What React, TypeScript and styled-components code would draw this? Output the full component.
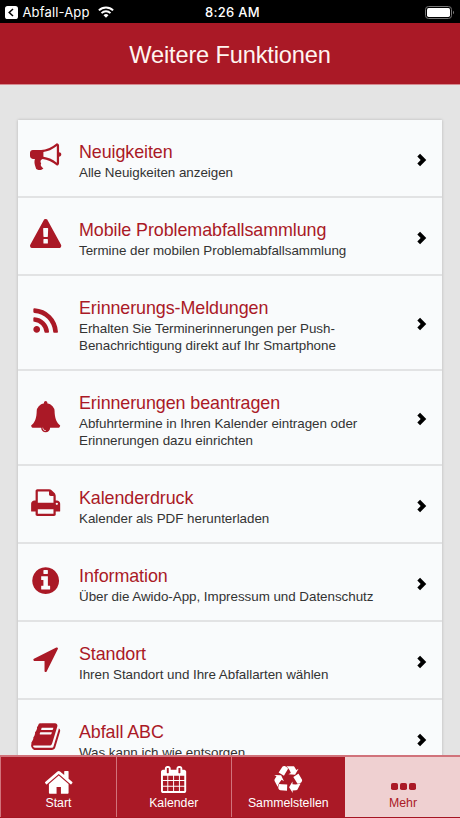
import React from "react";
import styled, { createGlobalStyle } from "styled-components";

const RED = "#aa1926";

const GlobalStyle = createGlobalStyle`
  * { box-sizing: border-box; }
  html, body { margin: 0; padding: 0; overflow: hidden; }
  body { font-family: "Liberation Sans", Arial, Helvetica, sans-serif; }
`;

const Screen = styled.div`
  width: 460px;
  height: 818px;
  display: flex;
  flex-direction: column;
  overflow: hidden;
  background: #e4e4e4;
`;

const StatusBar = styled.div`
  flex: none;
  height: 23px;
  display: grid;
  grid-template-columns: 1fr auto 1fr;
  align-items: center;
  padding: 1px 5px 0;
  background: #000;
  color: #fff;
  font: 500 13px/22px Inter, sans-serif;
`;

const BackGroup = styled.div`
  display: flex;
  align-items: center;
  font-weight: 400;
  letter-spacing: 0.15px;
`;

const BackLabel = styled.span`
  margin: 0 8px 0 4.5px;
`;

const Clock = styled.span`
  padding-left: 5px;
  letter-spacing: 0.3px;
`;

const BatterySlot = styled.div`
  display: flex;
  justify-content: flex-end;
`;

const Header = styled.header`
  flex: none;
  height: 62px;
  display: flex;
  align-items: center;
  justify-content: center;
  padding-top: 3px;
  background: ${RED};
  border-bottom: 1px solid #d58a90;
  color: #fff5f0;
`;

const Heading = styled.h1`
  margin: 0;
  font-size: 23.6px;
  font-weight: 400;
  letter-spacing: -0.15px;
  line-height: 28px;
`;

const Content = styled.main`
  flex: 1;
  min-height: 0;
  overflow: hidden;
  padding: 35px 18px 0;
`;

const Card = styled.div`
  background: #f9fbfc;
  box-shadow: 0 0 3px rgba(0, 0, 0, 0.2);
`;

const Row = styled.div<{ $height: number }>`
  height: ${(p) => p.$height}px;
  display: grid;
  grid-template-columns: 61px 1fr 26px;
  border-bottom: 2px solid #e2e3e4;
`;

const IconCell = styled.div`
  display: flex;
  align-items: center;
  padding: 0 0 2px 12px;
  color: ${RED};
`;

const TextCell = styled.div`
  padding-top: 21px;
  white-space: nowrap;
`;

const RowTitle = styled.div`
  color: ${RED};
  font-size: 17.9px;
  letter-spacing: -0.08px;
  line-height: 22px;
`;

const RowText = styled.div`
  color: #333;
  font-size: 13.4px;
  letter-spacing: -0.035px;
  line-height: 17px;
  padding-top: 1px;
`;

const ChevronCell = styled.div`
  display: flex;
  align-items: center;
  padding-top: 3px;
`;

const TabBar = styled.nav`
  flex: none;
  height: 63px;
  display: grid;
  grid-template-columns: 116px 114.5px 114.5px 115px;
  border-top: 2px solid #d1737b;
  border-bottom: 1px solid #a51522;
`;

const Tab = styled.div<{ $active?: boolean }>`
  display: flex;
  flex-direction: column;
  align-items: center;
  border-left: 1px solid ${(p) => (p.$active ? "#efd0d1" : "#d1737b")};
  background: ${(p) => (p.$active ? "#efd0d1" : RED)};
  color: ${(p) => (p.$active ? RED : "#fff")};
`;

const TabIconSlot = styled.div<{ $lift: number }>`
  height: 37px;
  display: flex;
  align-items: flex-end;
  padding-bottom: ${(p) => p.$lift}px;
`;

const TabLabel = styled.span`
  margin-top: 2px;
  font-size: 12.3px;
  line-height: 15px;
`;

const paths = {
  bullhorn:
    "M1664 640q53 0 90.5 37.5t37.5 90.5-37.5 90.5-90.5 37.5v384q0 52-38 90t-90 38q-417-347-812-380-58 19-91 66t-31 100.5 40 92.5q-20 33-23 65.5t6 58 33.500 55 48 50 61.500 50.500q-29 58-111.500 83t-168.500 11.500-132-55.500q-7-23-29.500-87.500t-32-94.500-23-89-15-101 3.500-98.500 22-110.500h-122q-66 0-113-47t-47-113v-192q0-66 47-113t113-47h480q435 0 896-384 52 0 90 38t38 90v384zm-128 604v-954q-394 302-768 343v270q377 42 768 341z",
  warning:
    "M1024 1375v-190q0-14-9.5-23.500t-22.500-9.500h-192q-13 0-22.500 9.500t-9.500 23.500v190q0 14 9.500 23.500t22.500 9.500h192q13 0 22.500-9.500t9.500-23.500zm-2-374l18-459q0-12-10-19-13-11-24-11h-220q-11 0-24 11-10 7-10 21l17 457q0 10 10 16.500t24 6.500h185q14 0 23.500-6.500t10.500-16.500zm-14-934l768 1408q35 63-2 126-17 29-46.500 46t-63.500 17h-1536q-34 0-63.500-17t-46.500-46q-37-63-2-126l768-1408q17-31 47-49t65-18 65 18 47 49z",
  rss:
    "M576 1344q0 80-56 136t-136 56-136-56-56-136 56-136 136-56 136 56 56 136zm512 123q2 28-17 48-18 21-47 21h-135q-25 0-43-16.500t-20-41.500q-22-229-184.500-391.500t-391.500-184.500q-25-2-41.500-20t-16.500-43v-135q0-29 21-47 17-17 43-17h5q160 13 306 80.500t259 181.500q114 113 181.500 259t80.500 306zm512 2q2 27-18 47-18 20-46 20h-143q-26 0-44.500-17.500t-19.500-42.500q-12-215-101-408.500t-231.500-336-336-231.500-408.500-102q-25-1-42.500-19.500t-17.500-43.500v-143q0-28 20-46 18-18 44-18h3q262 13 501.500 120t425.500 294q187 186 294 425.500t120 501.500z",
  bell:
    "M912 1696q0-16-16-16-59 0-101.500-42.500t-42.500-101.500q0-16-16-16t-16 16q0 73 51.500 124.500t124.500 51.500q16 0 16-16zm816-288q0 52-38 90t-90 38h-448q0 106-75 181t-181 75-181-75-75-181h-448q-52 0-90-38t-38-90q50-42 91-88t85-119.500 74.500-158.500 50-206 19.500-260q0-152 117-282.500t307-158.500q-8-19-8-39 0-40 28-68t68-28 68 28 28 68q0 20-8 39 190 28 307 158.500t117 282.500q0 139 19.500 260t50 206 74.500 158.500 85 119.500 91 88z",
  print:
    "M448 1536h896v-256h-896v256zm0-640h896v-384h-160q-40 0-68-28t-28-68v-160h-640v640zm1152 64q0-26-19-45t-45-19-45 19-19 45 19 45 45 19 45-19 19-45zm128 0v416q0 13-9.500 22.500t-22.500 9.500h-224v160q0 40-28 68t-68 28h-960q-40 0-68-28t-28-68v-160h-224q-13 0-22.500-9.500t-9.500-22.500v-416q0-79 56.500-135.500t135.500-56.500h64v-544q0-40 28-68t68-28h672q40 0 88 20t76 48l152 152q28 28 48 76t20 88v256h64q79 0 135.500 56.500t56.500 135.500z",
  info:
    "M1152 1376v-160q0-14-9-23t-23-9h-96v-512q0-14-9-23t-23-9h-320q-14 0-23 9t-9 23v160q0 14 9 23t23 9h96v320h-96q-14 0-23 9t-9 23v160q0 14 9 23t23 9h448q14 0 23-9t9-23zm-128-896v-160q0-14-9-23t-23-9h-192q-14 0-23 9t-9 23v160q0 14 9 23t23 9h192q14 0 23-9t9-23zm640 416q0 209-103 385.500t-279.500 279.500-385.500 103-385.500-103-279.500-279.500-103-385.500 103-385.500 279.500-279.500 385.500-103 385.500 103 279.500 279.500 103 385.500z",
  arrow:
    "M1593 349l-640 1280q-17 35-57 35-5 0-15-2-22-5-35.500-22.500t-13.500-39.500v-576h-576q-22 0-39.500-13.500t-22.500-35.500 4-42 29-30l1280-640q13-7 29-7 27 0 45 19 15 14 18.500 34.500t-6.500 39.500z",
  book:
    "M1703 478q40 57 18 129l-275 906q-19 64-76.500 107.500t-122.500 43.500h-923q-77 0-148.500-53.500t-99.500-131.500q-24-67-2-127 0-4 3-27t4-37q1-8-3-21.500t-3-19.500q2-11 8-21t16.500-23.500 16.500-23.500q23-38 45-91.500t30-91.500q3-10 .5-30t-.5-28q3-11 17-28t17-23q21-36 42-92t25-90q1-9-2.500-32t.5-28q4-13 22-30.500t22-22.500q19-26 42.500-84.500t27.500-96.500q1-8-3-25.500t-2-26.500q2-8 9-18t18-23 17-21q8-12 16.500-30.500t15-35 16-36 19.500-32 26.500-23.500 36-11.500 47.500 5.500l-1 3q38-9 51-9h761q74 0 114 56t18 130l-274 906q-36 119-71.500 153.500t-128.500 34.500h-869q-27 0-38 15-11 16-1 43 24 70 144 70h923q29 0 56-15.500t35-41.500l300-987q7-22 5-57 38 15 59 43zm-1064 2q-4 13 2 22.500t20 9.500h608q13 0 25.500-9.500t16.500-22.500l21-64q4-13-2-22.500t-20-9.500h-608q-13 0-25.500 9.500t-16.500 22.500zm-83 256q-4 13 2 22.500t20 9.500h608q13 0 25.500-9.500t16.500-22.500l21-64q4-13-2-22.500t-20-9.500h-608q-13 0-25.500 9.500t-16.500 22.500z",
  home:
    "M1472 992v480q0 26-19 45t-45 19h-384v-384h-256v384h-384q-26 0-45-19t-19-45v-480q0-1 .5-3t.5-3l575-474 575 474q1 2 1 6zm223-69l-62 74q-8 9-21 11h-3q-13 0-21-7l-692-577-692 577q-12 8-24 7-13-2-21-11l-62-74q-8-10-7-23.500t11-21.500l719-599q32-26 76-26t76 26l244 204v-195q0-14 9-23t23-9h192q14 0 23 9t9 23v408l219 182q10 8 11 21.500t-7 23.500z",
  calendar:
    "M192 1664h288v-288h-288v288zm352 0h320v-288h-320v288zm-352-352h288v-320h-288v320zm352 0h320v-320h-320v320zm-352-384h288v-288h-288v288zm736 736h320v-288h-320v288zm-384-736h320v-288h-320v288zm768 736h288v-288h-288v288zm-384-352h320v-320h-320v320zm-352-864v-288q0-13-9.500-22.500t-22.500-9.500h-64q-13 0-22.500 9.500t-9.500 22.500v288q0 13 9.500 22.500t22.500 9.500h64q13 0 22.500-9.500t9.500-22.500zm736 864h288v-320h-288v320zm-384-384h320v-288h-320v288zm384 0h288v-288h-288v288zm32-480v-288q0-13-9.500-22.500t-22.500-9.500h-64q-13 0-22.500 9.500t-9.500 22.500v288q0 13 9.500 22.500t22.500 9.500h64q13 0 22.500-9.500t9.500-22.500zm384-64v1280q0 52-38 90t-90 38h-1408q-52 0-90-38t-38-90v-1280q0-52 38-90t90-38h128v-96q0-66 47-113t113-47h64q66 0 113 47t47 113v96h384v-96q0-66 47-113t113-47h64q66 0 113 47t47 113v96h128q52 0 90 38t38 90z",
  recycle:
    "M836 1169l-15 368-2 22-420-29q-36-3-67-31.500t-47-65.500q-11-27-14.500-55t4-65 12-55 21.500-64 19-53q78 12 509 28zm-387-586l180 379-147-92q-63 72-111.500 144.500t-72.500 125-39.500 94.500-18.500 63l-4 21-190-357q-17-26-18-56t6-47l8-18q35-63 114-188l-140-86zm1231 517l-188 359q-12 29-36.500 46.500t-43.500 20.500l-18 4q-71 7-219 12l8 164-230-367 211-362 7 173q170 16 283 5t170-33zm-785-924q-47 63-265 435l-317-187-19-12 225-356q20-31 60-45t80-10q24 2 48.500 12t42 21 41.500 33 36 34.500 36 39.500 32 35zm655 307l212 363q18 37 12.500 76t-27.500 74q-13 20-33 37t-38 28-48.500 22-47 16-51.500 14-46 12q-34-72-265-436l313-195zm-143-226l142-83-220 373-419-20 151-86q-34-89-75-166t-75.500-123.500-64.500-80-47-46.500l-17-13 405 1q31-3 58 10.500t39 28.500l11 15q39 61 112 190z",
};

type IconName = keyof typeof paths;

const Icon = ({ name, size }: { name: IconName; size: number }) => (
  <svg width={size} height={size} viewBox="0 0 1792 1792" fill="currentColor" overflow="visible">
    <path d={paths[name]} />
  </svg>
);

const TabGlyph = ({ name, width, height, box }: { name: IconName; width: number; height: number; box: string }) => (
  <svg width={width} height={height} viewBox={box} preserveAspectRatio="none" fill="currentColor" overflow="visible">
    <path d={paths[name]} />
  </svg>
);

const Dots = () => (
  <svg width="25" height="7" viewBox="0 0 25 7" fill="currentColor">
    <rect width="7" height="7" rx="1.8" />
    <rect x="9" width="7" height="7" rx="1.8" />
    <rect x="18" width="7" height="7" rx="1.8" />
  </svg>
);

const Chevron = () => (
  <svg width="11" height="14" viewBox="0 0 11 14" fill="none" stroke="#000" strokeWidth="3.9">
    <path d="M2.7 2.2 7.500 7 2.700 11.800" />
  </svg>
);

const BackIcon = () => (
  <svg width="13" height="13" viewBox="0 0 13 13">
    <rect width="13" height="13" rx="2.6" fill="#fff" />
    <path d="M8 3 4.2 6.5 8 10" fill="none" stroke="#000" strokeWidth="1.5" />
  </svg>
);

const WifiIcon = () => (
  <svg width="16" height="12" viewBox="0 0 16 12" fill="none" stroke="#fff">
    <path d="M.9 4.4a10 10 0 0 1 14.2 0" strokeWidth="2" />
    <path d="M3.5 7.1a6.4 6.4 0 0 1 9 0" strokeWidth="1.9" />
    <path d="M8 11.7 5.5 9.2a3.6 3.6 0 0 1 5 0z" fill="#fff" stroke="none" />
  </svg>
);

const BatteryIcon = () => (
  <svg width="30" height="13" viewBox="0 0 30 13">
    <rect x=".5" y=".5" width="26" height="12" rx="3" fill="none" stroke="#777" />
    <rect x="2" y="2" width="23" height="9" rx="1.7" fill="#fff" />
    <path d="M28 4.7c1.4.7 1.4 2.9 0 3.6z" fill="#777" />
  </svg>
);

const rows: { icon: IconName; title: string; lines: string[]; height: number }[] = [
  { icon: "bullhorn", title: "Neuigkeiten", lines: ["Alle Neuigkeiten anzeigen"], height: 78 },
  { icon: "warning", title: "Mobile Problemabfallsammlung", lines: ["Termine der mobilen Problemabfallsammlung"], height: 78 },
  { icon: "rss", title: "Erinnerungs-Meldungen", lines: ["Erhalten Sie Terminerinnerungen per Push-", "Benachrichtigung direkt auf Ihr Smartphone"], height: 95 },
  { icon: "bell", title: "Erinnerungen beantragen", lines: ["Abfuhrtermine in Ihren Kalender eintragen oder", "Erinnerungen dazu einrichten"], height: 95 },
  { icon: "print", title: "Kalenderdruck", lines: ["Kalender als PDF herunterladen"], height: 78 },
  { icon: "info", title: "Information", lines: ["Über die Awido-App, Impressum und Datenschutz"], height: 78 },
  { icon: "arrow", title: "Standort", lines: ["Ihren Standort und Ihre Abfallarten wählen"], height: 78 },
  { icon: "book", title: "Abfall ABC", lines: ["Was kann ich wie entsorgen"], height: 78 },
];

const tabs: { label: string; glyph: React.ReactNode; lift: number; active?: boolean }[] = [
  { label: "Start", lift: 0, glyph: <TabGlyph name="home" width={27.5} height={22.8} box="90 253 1612 1283" /> },
  { label: "Kalender", lift: 1, glyph: <TabGlyph name="calendar" width={25.2} height={27} box="64 0 1664 1792" /> },
  { label: "Sammelstellen", lift: 1, glyph: <TabGlyph name="recycle" width={28.4} height={27} box="0 0 1792 1703" /> },
  { label: "Mehr", lift: 4, glyph: <Dots />, active: true },
];

export default function App() {
  return (
    <Screen>
      <GlobalStyle />
      <StatusBar>
        <BackGroup>
          <BackIcon />
          <BackLabel>Abfall-App</BackLabel>
          <WifiIcon />
        </BackGroup>
        <Clock>8:26 AM</Clock>
        <BatterySlot>
          <BatteryIcon />
        </BatterySlot>
      </StatusBar>
      <Header>
        <Heading>Weitere Funktionen</Heading>
      </Header>
      <Content>
        <Card>
          {rows.map((row) => (
            <Row key={row.title} $height={row.height}>
              <IconCell>
                <Icon name={row.icon} size={31.3} />
              </IconCell>
              <TextCell>
                <RowTitle>{row.title}</RowTitle>
                <RowText>
                  {row.lines.map((line) => (
                    <div key={line}>{line}</div>
                  ))}
                </RowText>
              </TextCell>
              <ChevronCell>
                <Chevron />
              </ChevronCell>
            </Row>
          ))}
        </Card>
      </Content>
      <TabBar>
        {tabs.map((tab) => (
          <Tab key={tab.label} $active={tab.active}>
            <TabIconSlot $lift={tab.lift}>{tab.glyph}</TabIconSlot>
            <TabLabel>{tab.label}</TabLabel>
          </Tab>
        ))}
      </TabBar>
    </Screen>
  );
}
